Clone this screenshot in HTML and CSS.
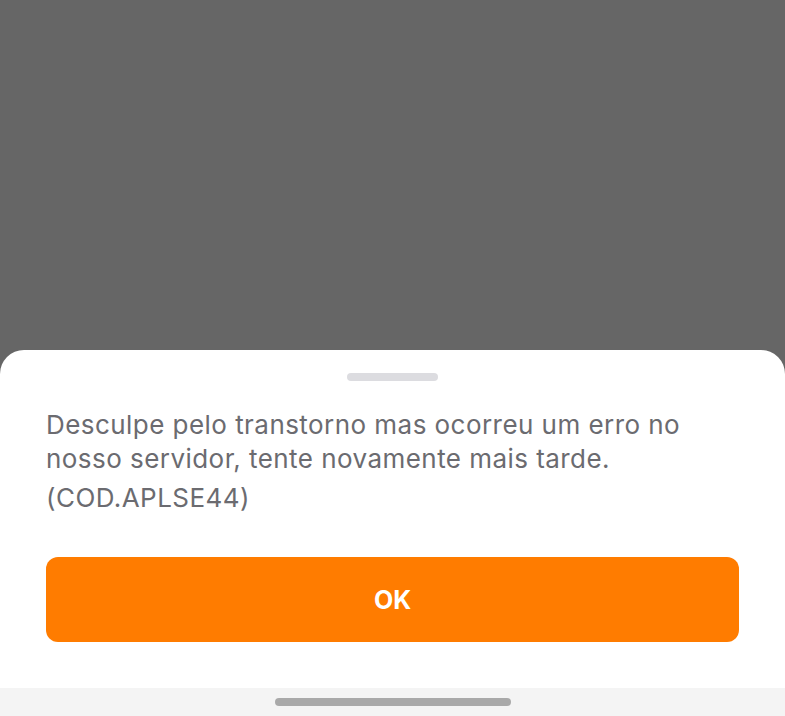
FILE: index.html
```html
<!DOCTYPE html>
<html lang="pt-BR">
<head>
  <meta charset="UTF-8">
  <meta name="viewport" content="width=device-width, initial-scale=1.0">
  <title>Erro</title>
  <link rel="stylesheet" href="styles.css">
</head>
<body>
  <div class="screen">
    <div class="backdrop"></div>

    <div class="sheet">
      <div class="sheet-handle"></div>
      <p class="sheet-message">Desculpe pelo transtorno mas ocorreu um erro no nosso servidor, tente novamente mais tarde.</p>
      <p class="sheet-code">(COD.APLSE44)</p>
      <button class="sheet-button" type="button">OK</button>
    </div>

    <div class="home-area">
      <div class="home-indicator"></div>
    </div>
  </div>
</body>
</html>
```

FILE: styles.css
```css
* {
  box-sizing: border-box;
}

body {
  margin: 0;
  font-family: Inter, "Noto Sans", sans-serif;
  background-color: #666666;
}

.screen {
  height: 716px;
  display: flex;
  flex-direction: column;
}

.backdrop {
  flex: 1;
  background-color: #666666;
}

.sheet {
  background-color: #fff;
  border-radius: 24px 24px 0 0;
  padding: 23px 46px 46px;
  display: flex;
  flex-direction: column;
}

.sheet-handle {
  align-self: center;
  width: 91px;
  height: 8px;
  border-radius: 4px;
  background-color: #dcdce0;
  margin-bottom: 27px;
}

.sheet-message,
.sheet-code {
  margin: 0;
  font-size: 26px;
  line-height: 34px;
  letter-spacing: 0.45px;
  color: #6b6b70;
}

.sheet-code {
  margin-top: 5px;
}

.sheet-button {
  margin-top: 42px;
  height: 85px;
  border: none;
  border-radius: 12px;
  background-color: #ff7c00;
  color: #fff;
  font-family: Inter, "Noto Sans", sans-serif;
  font-size: 25px;
  font-weight: 700;
  cursor: pointer;
}

.home-area {
  height: 28px;
  background-color: #f4f4f4;
  display: flex;
  justify-content: center;
  padding-top: 10px;
}

.home-indicator {
  width: 236px;
  height: 8px;
  border-radius: 4px;
  background-color: #a9a9a9;
}
```
